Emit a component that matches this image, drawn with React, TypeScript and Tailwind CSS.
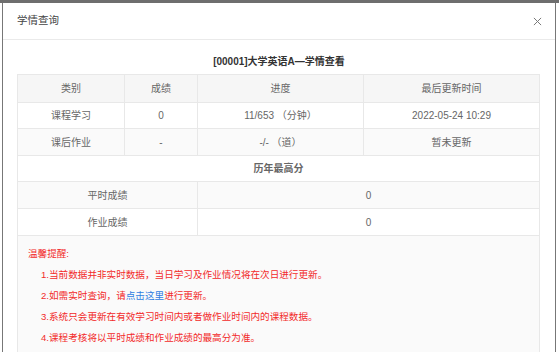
import React from "react";

const font = { fontFamily: '"Liberation Sans","Noto Sans CJK SC",sans-serif' };

function Cell({ w, children, last }: { w: string; children: React.ReactNode; last?: boolean }) {
  return (
    <div className={`${w} flex items-center justify-center ${last ? "" : "border-r border-[#e8e8e8]"}`}>{children}</div>
  );
}

export default function App() {
  const row = "flex border-b border-[#e8e8e8] text-[10px] text-[#666]";
  return (
    <div className="w-[559px] h-[352px] overflow-hidden bg-white" style={font}>
      <div className="h-[3px] w-full bg-[#6e6e6e]" />
      <div className="ml-[2px] w-[554px] h-[349px] border-x border-[#777] bg-white">
        <div className="flex items-center justify-between h-[37px] border-b border-[#eaeaea] pl-[14px] pr-[12px]">
          <span className="text-[10.5px] text-[#444]">学情查询</span>
          <svg width="9" height="9" viewBox="0 0 10 10" className="mr-[1px]">
            <path d="M1 1L9 9M9 1L1 9" stroke="#777" strokeWidth="1.1" />
          </svg>
        </div>
        <div className="px-[14px]">
          <div className="h-[34px] pt-[9px] flex items-center justify-center text-[10px] font-bold text-[#333]">
            [00001]大学英语A—学情查看
          </div>
          <div className="w-[523px] border-x border-t border-[#e8e8e8]">
            <div className={`${row} h-[28px] bg-[#f6f6f6]`}>
              <Cell w="w-[107px]">类别</Cell>
              <Cell w="w-[73px]">成绩</Cell>
              <Cell w="w-[166px]">进度</Cell>
              <Cell w="flex-1" last>最后更新时间</Cell>
            </div>
            <div className={`${row} h-[26px] bg-white`}>
              <Cell w="w-[107px]">课程学习</Cell>
              <Cell w="w-[73px]">0</Cell>
              <Cell w="w-[166px]">11/653 （分钟）</Cell>
              <Cell w="flex-1" last>2022-05-24 10:29</Cell>
            </div>
            <div className={`${row} h-[27px] bg-[#fafafa]`}>
              <Cell w="w-[107px]">课后作业</Cell>
              <Cell w="w-[73px]">-</Cell>
              <Cell w="w-[166px]">-/- （道）</Cell>
              <Cell w="flex-1" last>暂未更新</Cell>
            </div>
            <div className={`${row} h-[26px] bg-white justify-center items-center font-bold text-[#333]`}>历年最高分</div>
            <div className={`${row} h-[27px] bg-[#fafafa]`}>
              <Cell w="w-[180px]">平时成绩</Cell>
              <Cell w="flex-1" last>0</Cell>
            </div>
            <div className={`${row} h-[27px] bg-white`}>
              <Cell w="w-[180px]">作业成绩</Cell>
              <Cell w="flex-1" last>0</Cell>
            </div>
            <div className="bg-[#fafafa] pt-[7px] pl-[10px] text-[9.6px] leading-[21px] text-[#f22a2a] h-[130px]">
              <div>温馨提醒:</div>
              <div className="ml-[13px]">1.当前数据并非实时数据，当日学习及作业情况将在次日进行更新。</div>
              <div className="ml-[13px]">
                2.如需实时查询，请<span className="text-[#2f7de1]">点击这里</span>进行更新。
              </div>
              <div className="ml-[13px]">3.系统只会更新在有效学习时间内或者做作业时间内的课程数据。</div>
              <div className="ml-[13px]">4.课程考核将以平时成绩和作业成绩的最高分为准。</div>
            </div>
          </div>
        </div>
      </div>
    </div>
  );
}
